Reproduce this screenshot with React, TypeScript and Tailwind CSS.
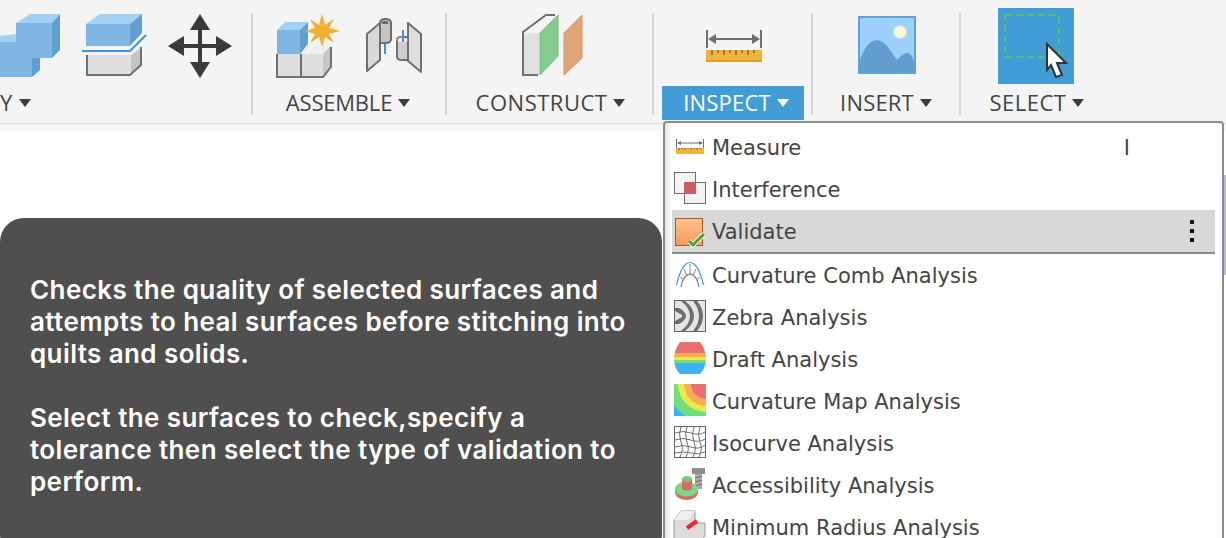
import type { ReactNode } from 'react'

const Caret = ({ color = '#3d3d3d' }: { color?: string }) => (
    <svg width="12" height="8" viewBox="0 0 12 8" className="mt-[1px] shrink-0">
        <polygon points="0,0 12,0 6,8" fill={color} />
    </svg>
)

// toolbar icons keep page coordinates in the viewBox, 86px tall
const ToolIcon = ({ x, w, children }: { x: number; w: number; children: ReactNode }) => (
    <svg width={w} height="86" viewBox={`${x} 0 ${w} 86`} className="shrink-0">
        {children}
    </svg>
)

const Separator = () => <div className="mt-[13px] h-[102px] w-[2px] shrink-0 bg-[#d6d6d6]" />

const StackIcon = () => (
    <ToolIcon x={0} w={62}>
        <polygon points="16,23 30,14 60,14 52,23" fill="#a3d0f5" />
        <rect x="16" y="23" width="36" height="35" fill="#80b6e4" />
        <polygon points="52,23 60,14 60,50 52,58" fill="#609fcf" />
        <polygon points="0,42 0,36 16,34 16,42" fill="#a3d0f5" />
        <rect x="0" y="42" width="32" height="35" fill="#80b6e4" />
        <polygon points="32,58 40,58 40,70 32,77" fill="#609fcf" />
    </ToolIcon>
)

const SplitIcon = () => (
    <ToolIcon x={82} w={66}>
        <polygon points="86,24 100,14 142,14 130,24" fill="#a3d0f5" />
        <rect x="86" y="24" width="44" height="22" fill="#80b6e4" />
        <polygon points="130,24 142,14 142,33 130,46" fill="#609fcf" />
        <polyline points="82,51 130,51 146,35" fill="none" stroke="#3f94dd" strokeWidth="2" />
        <polygon points="87,55 131,55 142,47 141,65 130,75 87,75" fill="#dedede" />
        <polygon points="131,55 141,48 141,65 131,74" fill="#c4c4c4" />
        <polyline points="87,55 87,75 130,75 141,65 141,47" fill="none" stroke="#707070" strokeWidth="2" />
    </ToolIcon>
)

const MoveIcon = () => (
    <ToolIcon x={168} w={64}>
        <polygon points="200,14 210,30 190,30" fill="#3a3a3a" />
        <polygon points="200,78 210,62 190,62" fill="#3a3a3a" />
        <polygon points="168,46 184,36 184,56" fill="#3a3a3a" />
        <polygon points="232,46 216,36 216,56" fill="#3a3a3a" />
        <rect x="198" y="28" width="4" height="36" fill="#3a3a3a" />
        <rect x="182" y="44" width="36" height="4" fill="#3a3a3a" />
    </ToolIcon>
)

const AssembleIcon = () => (
    <ToolIcon x={276} w={64}>
        <polygon points="277,54 301,54 308,46 331,46 331,66 323,77 277,77" fill="#dedede" />
        <polygon points="301,54 323,54 331,46 308,46" fill="#efefef" />
        <polygon points="323,54 331,46 331,66 323,76" fill="#c6c6c6" />
        <path d="M277 54V77H323L331 67V47M301 54V77" fill="none" stroke="#707070" strokeWidth="2" />
        <polygon points="277,30 285,22 308,22 300,30" fill="#a3d0f5" />
        <rect x="277" y="30" width="23" height="24" fill="#80b6e4" />
        <polygon points="300,30 308,22 308,44 300,54" fill="#609fcf" />
        <polygon
            points="322,14 325,25 334,19 329,28 340,31 329,34 334,43 325,37 322,47 319,37 310,43 315,34 305,31 315,28 310,19 319,25"
            fill="#efb034"
        />
    </ToolIcon>
)

const JointIcon = () => (
    <ToolIcon x={365} w={58}>
        <path d="M367 34L380 23V60L367 71Z" fill="#d8d8d8" stroke="#707070" strokeWidth="2" strokeLinejoin="round" />
        <path d="M380 23Q380 19 385.500 19Q391 19 391 23V39Q391 43 385.500 43H380Z" fill="#c4c4c4" stroke="#707070" strokeWidth="2" />
        <ellipse cx="385" cy="22.500" rx="3.500" ry="1.500" fill="#666666" />
        <rect x="384" y="44" width="2" height="10" fill="#3f94dd" />
        <path d="M408 23L421 34V72L408 61Z" fill="#dedede" stroke="#707070" strokeWidth="2" strokeLinejoin="round" />
        <path d="M397 40V57Q397 60 402 60H408V37H402Q397 37 397 40Z" fill="#cdcdcd" stroke="#707070" strokeWidth="2" />
        <ellipse cx="402.500" cy="40" rx="5" ry="2.500" fill="#ececec" />
        <rect x="402" y="30" width="2" height="12" fill="#3f94dd" />
    </ToolIcon>
)

const ConstructIcon = () => (
    <ToolIcon x={522} w={62}>
        <polygon points="523,33 539,33 539,75 523,75" fill="#e2e2e2" />
        <polyline points="538,75 523,75 523,32 546,15 555,15" fill="none" stroke="#707070" strokeWidth="2" />
        <polygon points="540,33 558,15 558,56 540,75" fill="#84cb90" stroke="#72bd80" strokeWidth="1" />
        <polygon points="564,33 582,15 582,58 564,75" fill="#dfa577" stroke="#d79766" strokeWidth="1" />
    </ToolIcon>
)

const MeasureIcon = () => (
    <ToolIcon x={706} w={56}>
        <rect x="706" y="30" width="2" height="18" fill="#6f6f6f" />
        <rect x="760" y="30" width="2" height="18" fill="#6f6f6f" />
        <rect x="711" y="38" width="46" height="2" fill="#6f6f6f" />
        <polygon points="708,39 716,34 716,44" fill="#6f6f6f" />
        <polygon points="760,39 752,34 752,44" fill="#6f6f6f" />
        <rect x="706" y="50" width="56" height="12" fill="#f2b33a" />
        <rect x="706" y="60" width="56" height="2" fill="#dd9f2c" />
        <path d="M712 50v5M718 50v3M724 50v5M730 50v3M736 50v5M742 50v3M748 50v5M754 50v3" stroke="#77683f" strokeWidth="1.5" />
    </ToolIcon>
)

const InsertIcon = () => (
    <ToolIcon x={858} w={58}>
        <rect x="858" y="16" width="58" height="58" fill="#5fa2d6" />
        <rect x="860" y="18" width="54" height="54" fill="#9ccffa" />
        <circle cx="900" cy="32" r="7.500" fill="#b9d8ee" />
        <circle cx="900" cy="32" r="6" fill="#fdf8cf" />
        <path d="M860 60Q866 42 876 40Q884 40 890 50L897 60Q904 52 908 53Q912 54 914 62V72H860Z" fill="#619ecd" />
    </ToolIcon>
)

const SelectIcon = () => (
    <ToolIcon x={998} w={76}>
        <rect x="998" y="8" width="76" height="76" fill="#429cd6" />
        <rect x="1005" y="15" width="54" height="42" fill="none" stroke="#62bb6c" strokeWidth="2" strokeDasharray="7 4" />
        <polygon
            points="1047,44 1066,63 1057,63 1062,75 1056,77 1051,65 1047,70"
            fill="#ffffff"
            stroke="#333333"
            strokeWidth="2"
        />
    </ToolIcon>
)

const MeasureSmall = () => (
    <svg width="34" height="34" viewBox="0 0 34 34" className="shrink-0">
        <path d="M3.500 9v9M30.500 9v9M5 13h24" stroke="#6f6f6f" strokeWidth="1" fill="none" />
        <polygon points="4,13 8,11 8,15" fill="#6f6f6f" />
        <polygon points="30,13 26,11 26,15" fill="#6f6f6f" />
        <rect x="3" y="18" width="28" height="6" fill="#f2b33a" />
        <path d="M6 18v2M9 18v1M12 18v2M15 18v1M18 18v2M21 18v1M24 18v2M27 18v1" stroke="#77683f" strokeWidth="1" />
    </svg>
)

const InterferenceSmall = () => (
    <svg width="34" height="34" viewBox="0 0 34 34" className="shrink-0">
        <rect x="1.500" y="0.500" width="21" height="21" fill="#f4f4f4" stroke="#6f6f6f" />
        <rect x="11.500" y="10.500" width="21" height="21" fill="#f2f2f2" stroke="#6f6f6f" />
        <rect x="11" y="10" width="12" height="12" fill="#cf5a5f" />
    </svg>
)

const ValidateSmall = () => (
    <svg width="34" height="34" viewBox="0 0 34 34" className="shrink-0">
        <defs>
            <linearGradient id="orangeFill" x1="0" y1="0" x2="0" y2="1">
                <stop offset="0" stopColor="#ffc28c" />
                <stop offset="1" stopColor="#f79a5c" />
            </linearGradient>
        </defs>
        <rect x="2.500" y="4.500" width="27" height="27" fill="url(#orangeFill)" stroke="#b5562a" />
        <polyline points="16,27 20,31 31,20" fill="none" stroke="#ffffff" strokeWidth="5" />
        <polyline points="16,27 20,31 31,20" fill="none" stroke="#4aa02c" strokeWidth="3" />
    </svg>
)

const CombSmall = () => (
    <svg width="34" height="34" viewBox="0 0 34 34" className="shrink-0">
        <path d="M8 29Q10 17 17 16Q24 17 26 29" fill="none" stroke="#8a8a8a" strokeWidth="1.400" />
        <path d="M7 19l4 3M11 11l3 7M17 6v10M23 11l-3 7M27 19l-4 3" stroke="#8a8a8a" strokeWidth="1" />
        <path d="M3.500 27Q7 11 13 6Q17 3 21 6Q27 11 30.500 27" fill="none" stroke="#3d9be6" strokeWidth="1.200" />
    </svg>
)

const ZebraSmall = () => (
    <svg width="34" height="34" viewBox="0 0 34 34" className="shrink-0">
        <rect x="1.500" y="0.500" width="31" height="31" fill="#e4e4e4" />
        <path d="M2 8H6Q13 12 13 16Q13 20 6 24H2V21L9 17V15L2 11Z" fill="#6e6e6e" />
        <path d="M8 1H12Q21 8 21 16Q21 24 12 31H8Q17 24 17 16Q17 8 8 1Z" fill="#6e6e6e" />
        <path d="M20 1H24Q30 8 30 16Q30 24 24 31H20Q26 24 26 16Q26 8 20 1Z" fill="#6e6e6e" />
        <rect x="1.500" y="0.500" width="31" height="31" fill="none" stroke="#666666" />
    </svg>
)

const DraftSmall = () => (
    <svg width="34" height="34" viewBox="0 0 34 34" className="shrink-0">
        <clipPath id="barrel">
            <path d="M7 0H27Q33 8 33 17Q33 26 27 32H7Q1 26 1 17Q1 8 7 0Z" />
        </clipPath>
        <g clipPath="url(#barrel)">
            <rect x="0" y="0" width="34" height="11" fill="#e96f70" />
            <rect x="0" y="11" width="34" height="4" fill="#f9ac55" />
            <rect x="0" y="15" width="34" height="3" fill="#ecea4a" />
            <rect x="0" y="18" width="34" height="3" fill="#70e07c" />
            <rect x="0" y="21" width="34" height="11" fill="#3fb2f4" />
        </g>
    </svg>
)

const MapSmall = () => (
    <svg width="34" height="34" viewBox="0 0 34 34" className="shrink-0">
        <clipPath id="mapBox">
            <rect x="1" y="0" width="32" height="32" />
        </clipPath>
        <g clipPath="url(#mapBox)">
            <rect x="1" y="0" width="32" height="32" fill="#3fb2f4" />
            <circle cx="33" cy="0" r="38" fill="#70e07c" />
            <circle cx="33" cy="0" r="28" fill="#ecea4a" />
            <circle cx="33" cy="0" r="22" fill="#f9ac55" />
            <circle cx="33" cy="0" r="15" fill="#e96f70" />
        </g>
    </svg>
)

const IsoSmall = () => (
    <svg width="34" height="34" viewBox="0 0 34 34" className="shrink-0">
        <rect x="1.500" y="0.500" width="31" height="31" fill="#ffffff" stroke="#666666" />
        <path
            d="M2 7Q10 4 18 7T32 6M2 14Q10 11 18 14T32 13M2 21Q10 18 18 21T32 19M2 27Q10 25 18 27T32 26M8 1Q5 8 8 16T7 31M14 1Q11 8 14 16T13 31M21 1Q18 8 21 16T20 31M27 1Q24 8 27 16T26 31"
            fill="none"
            stroke="#707070"
            strokeWidth="1"
        />
    </svg>
)

const AccessSmall = () => (
    <svg width="34" height="34" viewBox="0 0 34 34" className="shrink-0">
        <rect x="19" y="0" width="13" height="6" fill="#8e8e8e" />
        <rect x="22" y="6" width="7" height="15" fill="#aaaaaa" />
        <path d="M22 10l7-2M22 14l7-2M22 18l7-2" stroke="#6f6f6f" strokeWidth="1" />
        <ellipse cx="13.500" cy="24" rx="11.500" ry="8" fill="#d9686c" />
        <ellipse cx="13.500" cy="21" rx="11.500" ry="7.500" fill="#7ad982" />
        <rect x="9" y="11" width="10" height="9" fill="#d9686c" />
        <ellipse cx="14" cy="20" rx="5" ry="2.500" fill="#d9686c" />
        <ellipse cx="14" cy="11" rx="5" ry="3" fill="#6fcf79" />
    </svg>
)

const RadiusSmall = () => (
    <svg width="34" height="34" viewBox="0 0 34 34" className="shrink-0">
        <polygon points="1,10 8,1 22,1 22,10 24,13 32,13 32,26 24,34 1,34" fill="#dcdcdc" stroke="#9a9a9a" strokeWidth="1" />
        <polygon points="1,10 8,1 22,1 15,10" fill="#efefef" />
        <polyline points="14,18 24,11" fill="none" stroke="#f0282d" strokeWidth="4" />
    </svg>
)

const menuRows: { label: string; icon: ReactNode }[] = [
    { label: 'Curvature Comb Analysis', icon: <CombSmall /> },
    { label: 'Zebra Analysis', icon: <ZebraSmall /> },
    { label: 'Draft Analysis', icon: <DraftSmall /> },
    { label: 'Curvature Map Analysis', icon: <MapSmall /> },
    { label: 'Isocurve Analysis', icon: <IsoSmall /> },
    { label: 'Accessibility Analysis', icon: <AccessSmall /> },
    { label: 'Minimum Radius Analysis', icon: <RadiusSmall /> },
]

const MenuRow = ({ icon, label, children }: { icon: ReactNode; label: string; children?: ReactNode }) => (
    <div className="flex h-[42px] shrink-0 items-center gap-[5px] pl-[1px]">
        {icon}
        <span className="whitespace-nowrap pt-[4px]">{label}</span>
        {children}
    </div>
)

function App() {
    return (
        <div className="relative h-[538px] w-[1226px] overflow-hidden bg-white">
            <div className="h-[124px] overflow-hidden border-b border-[#d9d9d9] bg-[#f4f4f4] font-['Open_Sans',sans-serif] text-[22px] tracking-[0.2px] text-[#444444]">
                <div className="flex">
                    <div className="w-[251px] shrink-0">
                        <div className="flex h-[86px]">
                            <StackIcon />
                            <div className="ml-[20px]"><SplitIcon /></div>
                            <div className="ml-[20px]"><MoveIcon /></div>
                        </div>
                        <div className="flex h-[34px] items-center gap-[6px] pb-[2px]">
                            <span>Y</span>
                            <Caret />
                        </div>
                    </div>
                    <Separator />

                    <div className="w-[192px] shrink-0">
                        <div className="flex h-[86px] gap-[25px] pl-[23px]">
                            <AssembleIcon />
                            <JointIcon />
                        </div>
                        <div className="flex h-[34px] items-center justify-center gap-[6px] pb-[2px] pr-[2px] tracking-[-0.2px]">
                            ASSEMBLE <Caret />
                        </div>
                    </div>
                    <Separator />

                    <div className="w-[205px] shrink-0">
                        <div className="flex h-[86px] pl-[75px]">
                            <ConstructIcon />
                        </div>
                        <div className="flex h-[34px] items-center justify-center gap-[6px] pb-[2px] pl-[2px] tracking-[0.5px]">
                            CONSTRUCT <Caret />
                        </div>
                    </div>
                    <Separator />

                    <div className="w-[157px] shrink-0">
                        <div className="flex h-[86px] pl-[52px]">
                            <MeasureIcon />
                        </div>
                        <div className="ml-[8px] flex h-[34px] w-[142px] items-center justify-center gap-[6px] bg-[#429cd6] pb-[2px] pl-[6px] text-white">
                            INSPECT <Caret color="#ffffff" />
                        </div>
                    </div>
                    <Separator />

                    <div className="w-[146px] shrink-0">
                        <div className="flex h-[86px] pl-[45px]">
                            <InsertIcon />
                        </div>
                        <div className="flex h-[34px] items-center justify-center gap-[6px] pb-[2px]">
                            INSERT <Caret />
                        </div>
                    </div>
                    <Separator />

                    <div className="w-[150px] shrink-0">
                        <div className="flex h-[86px] pl-[37px]">
                            <SelectIcon />
                        </div>
                        <div className="flex h-[34px] items-center justify-center gap-[6px] pb-[2px] pl-[2px] tracking-[0.5px]">
                            SELECT <Caret />
                        </div>
                    </div>
                </div>
            </div>
            <div className="h-[6px] bg-[#f6f6f6]" />

            <div className="absolute left-0 top-[218px] h-[340px] w-[662px] rounded-[24px] bg-[#4f4f4f] px-[30px] pt-[56px] font-['Inter',sans-serif] text-[26px] font-semibold leading-[32px] tracking-[0.4px] text-white">
                <p>Checks the quality of selected surfaces and attempts to heal surfaces before stitching into quilts and solids.</p>
                <p className="mt-[32px]">Select the surfaces to check,specify a tolerance then select the type of validation to perform.</p>
            </div>

            <div className="absolute left-[1224px] top-[175px] h-[100px] w-[2px] bg-[#b9b9e6]" />

            <div className="absolute left-[663px] top-[121px] flex h-[440px] w-[561px] flex-col rounded-t-[4px] border-2 border-[#8b8b8b] bg-white px-[7px] pt-[3px] font-['DejaVu_Sans',sans-serif] text-[21px] text-[#444444] shadow-[inset_7px_0_6px_-5px_rgba(0,0,0,0.14)]">
                <MenuRow icon={<MeasureSmall />} label="Measure">
                    <span className="ml-auto mr-[85px] pt-[4px]">I</span>
                </MenuRow>
                <MenuRow icon={<InterferenceSmall />} label="Interference" />
                <div className="border-b-2 border-[#8b8b8b] bg-[#d8d8d8]">
                    <MenuRow icon={<ValidateSmall />} label="Validate">
                        <div className="ml-auto mr-[21px] flex flex-col gap-[5px]">
                            <div className="h-[4px] w-[4px] bg-[#111111]" />
                            <div className="h-[4px] w-[4px] bg-[#111111]" />
                            <div className="h-[4px] w-[4px] bg-[#111111]" />
                        </div>
                    </MenuRow>
                </div>
                {menuRows.map((row) => (
                    <MenuRow key={row.label} icon={row.icon} label={row.label} />
                ))}
            </div>
        </div>
    )
}

export default App
